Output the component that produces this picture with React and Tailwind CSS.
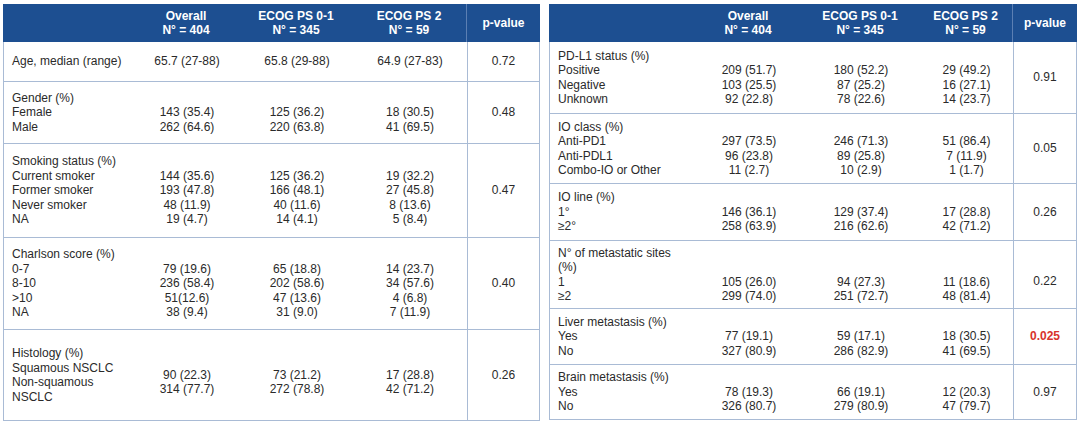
import React from "react";

const leftRows = [
  {
    h: "h-[39px]",
    label: ["Age, median (range)"],
    vals: [["65.7 (27-88)"], ["65.8 (29-88)"], ["64.9 (27-83)"]],
    p: "0.72",
  },
  {
    h: "h-[62px]",
    label: ["Gender (%)", "Female", "Male"],
    vals: [
      ["", "143 (35.4)", "262 (64.6)"],
      ["", "125 (36.2)", "220 (63.8)"],
      ["", "18 (30.5)", "41 (69.5)"],
    ],
    p: "0.48",
  },
  {
    h: "h-[94px]",
    label: ["Smoking status (%)", "Current smoker", "Former smoker", "Never smoker", "NA"],
    vals: [
      ["", "144 (35.6)", "193 (47.8)", "48 (11.9)", "19 (4.7)"],
      ["", "125 (36.2)", "166 (48.1)", "40 (11.6)", "14 (4.1)"],
      ["", "19 (32.2)", "27 (45.8)", "8 (13.6)", "5 (8.4)"],
    ],
    p: "0.47",
  },
  {
    h: "h-[92px]",
    label: ["Charlson score (%)", "0-7", "8-10", ">10", "NA"],
    vals: [
      ["", "79 (19.6)", "236 (58.4)", "51(12.6)", "38 (9.4)"],
      ["", "65 (18.8)", "202 (58.6)", "47 (13.6)", "31 (9.0)"],
      ["", "14 (23.7)", "34 (57.6)", "4 (6.8)", "7 (11.9)"],
    ],
    p: "0.40",
  },
  {
    h: "h-[91px]",
    label: ["Histology (%)", "Squamous NSCLC", "Non-squamous", "NSCLC"],
    vals: [
      ["", "90 (22.3)", "314 (77.7)"],
      ["", "73 (21.2)", "272 (78.8)"],
      ["", "17 (28.8)", "42 (71.2)"],
    ],
    p: "0.26",
  },
];

const rightRows = [
  {
    h: "h-[71px]",
    label: ["PD-L1 status (%)", "Positive", "Negative", "Unknown"],
    vals: [
      ["", "209 (51.7)", "103 (25.5)", "92 (22.8)"],
      ["", "180 (52.2)", "87 (25.2)", "78 (22.6)"],
      ["", "29 (49.2)", "16 (27.1)", "14 (23.7)"],
    ],
    p: "0.91",
  },
  {
    h: "h-[70px]",
    label: ["IO class (%)", "Anti-PD1", "Anti-PDL1", "Combo-IO or Other"],
    vals: [
      ["", "297 (73.5)", "96 (23.8)", "11 (2.7)"],
      ["", "246 (71.3)", "89 (25.8)", "10 (2.9)"],
      ["", "51 (86.4)", "7 (11.9)", "1 (1.7)"],
    ],
    p: "0.05",
  },
  {
    h: "h-[57px]",
    label: ["IO line (%)", "1°", "≥2°"],
    vals: [
      ["", "146 (36.1)", "258 (63.9)"],
      ["", "129 (37.4)", "216 (62.6)"],
      ["", "17 (28.8)", "42 (71.2)"],
    ],
    p: "0.26",
  },
  {
    h: "h-[68px]",
    label: ["N° of metastatic sites", "(%)", "1", "≥2"],
    vals: [
      ["", "", "105 (26.0)", "299 (74.0)"],
      ["", "", "94 (27.3)", "251 (72.7)"],
      ["", "", "11 (18.6)", "48 (81.4)"],
    ],
    p: "0.22",
    pAdj: "pt-[14px]",
  },
  {
    h: "h-[56px]",
    label: ["Liver metastasis (%)", "Yes", "No"],
    vals: [
      ["", "77 (19.1)", "327 (80.9)"],
      ["", "59 (17.1)", "286 (82.9)"],
      ["", "18 (30.5)", "41 (69.5)"],
    ],
    p: "0.025",
    red: true,
  },
  {
    h: "h-[55px]",
    label: ["Brain metastasis (%)", "Yes", "No"],
    vals: [
      ["", "78 (19.3)", "326 (80.7)"],
      ["", "66 (19.1)", "279 (80.9)"],
      ["", "12 (20.3)", "47 (79.7)"],
    ],
    p: "0.97",
  },
];

const heads = [
  ["Overall", "N° = 404"],
  ["ECOG PS 0-1", "N° = 345"],
  ["ECOG PS 2", "N° = 59"],
];

function Lines({ lines }) {
  return (
    <div>
      {lines.map((l, i) => (
        <div key={i} className="whitespace-nowrap">
          {l === "" ? "\u00a0" : l}
        </div>
      ))}
    </div>
  );
}

function Table({ cols, rows, width }) {
  return (
    <div className={width}>
      <div className={`grid ${cols} h-[38px] bg-[#1d4f91] text-white font-bold leading-[14px]`}>
        <div />
        {heads.map((h, i) => (
          <div key={i} className="flex flex-col items-center justify-center">
            <div>{h[0]}</div>
            <div>{h[1]}</div>
          </div>
        ))}
        <div className="flex items-center justify-center border-l border-[#5b7fb3]">p-value</div>
      </div>
      <div className="border-x border-b border-[#a9bbd5]">
        {rows.map((r, i) => (
          <div
            key={i}
            className={`grid ${cols} ${r.h} ${i > 0 ? "border-t border-[#a9bbd5]" : ""}`}
          >
            <div className="flex items-center pl-2">
              <Lines lines={r.label} />
            </div>
            {r.vals.map((v, j) => (
              <div key={j} className="flex items-center justify-center text-center">
                <Lines lines={v} />
              </div>
            ))}
            <div
              className={`flex items-center justify-center border-l border-[#a9bbd5] ${
                r.pAdj || ""
              } ${r.red ? "text-[#d8342c] font-bold" : ""}`}
            >
              {r.p}
            </div>
          </div>
        ))}
      </div>
    </div>
  );
}

export default function App() {
  return (
    <div className="w-[1080px] h-[422px] bg-white pt-[4px] pl-[3px] flex gap-[9px] text-[12px] leading-[14.5px] text-[#2a2a2a] font-['Liberation_Sans',Arial,sans-serif]">
      <Table
        width="w-[537px]"
        cols="grid-cols-[129px_108px_112px_114px_1fr]"
        rows={leftRows}
      />
      <Table
        width="w-[528px]"
        cols="grid-cols-[146px_106px_118px_93px_1fr]"
        rows={rightRows}
      />
    </div>
  );
}
